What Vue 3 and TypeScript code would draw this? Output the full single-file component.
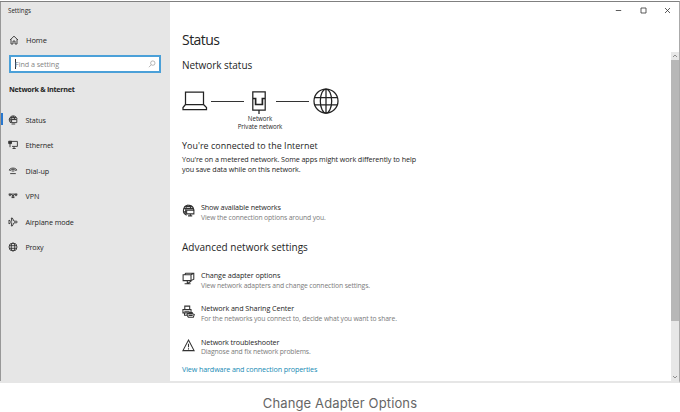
<script setup lang="ts">
interface NavItem { id: string; label: string; spacing: number }
interface Action { id: string; title: string; detail: string; ts: number; ds: number }

const nav: NavItem[] = [
  { id: 'status', label: 'Status', spacing: -0.1 },
  { id: 'ethernet', label: 'Ethernet', spacing: -0.15 },
  { id: 'dialup', label: 'Dial-up', spacing: -0.05 },
  { id: 'vpn', label: 'VPN', spacing: 0 },
  { id: 'airplane', label: 'Airplane mode', spacing: -0.07 },
  { id: 'proxy', label: 'Proxy', spacing: -0.2 },
]
const available: Action = { id: 'available', title: 'Show available networks', detail: 'View the connection options around you.', ts: -0.12, ds: -0.13 }
const advanced: Action[] = [
  { id: 'adapter', title: 'Change adapter options', detail: 'View network adapters and change connection settings.', ts: -0.06, ds: -0.14 },
  { id: 'sharing', title: 'Network and Sharing Center', detail: 'For the networks you connect to, decide what you want to share.', ts: -0.07, ds: -0.14 },
  { id: 'trouble', title: 'Network troubleshooter', detail: 'Diagnose and fix network problems.', ts: -0.12, ds: -0.14 },
]
</script>

<template>
  <figure class="figure">
    <div class="window">
      <aside class="sidebar">
        <div class="app-name"><span>Settings</span></div>
        <div class="home">
          <svg class="icon" viewBox="0 0 10 10"><path d="M1 5 5 1.2 9 5M2 4.3V9h2V6h2v3h2V4.3" /></svg>
          <span>Home</span>
        </div>
        <div class="search">
          <i class="caret"></i><span>Find a setting</span>
          <svg viewBox="0 0 8 8"><circle cx="4.8" cy="3.1" r="2.2" /><path d="M3.2 4.8.9 7.2" /></svg>
        </div>
        <div class="category"><span>Network &amp; Internet</span></div>
        <nav>
          <div v-for="n in nav" :key="n.id" class="nav-item" :class="{ active: n.id === 'status' }">
            <svg class="icon" viewBox="0 0 10 10">
              <g v-if="n.id === 'status'"><path d="M2.8 8A4 4 0 1 1 9.2 4.2M1 4.2h7.7M2.2 2.5h5.8M4.4 1C2.8 3 2.6 5 3 8M5.4 1l1.3 3" /><path d="M3.6 4.6h5.2v3H3.6zM3.5 9h3.7" /></g>
              <g v-else-if="n.id === 'ethernet'"><path d="M2.8 1.4h6.6v5H4M4.5 8.5h3.2M6 6.5v2M2 3.7v3.5" /><path class="fill" d="M.7 1.2h2.8v2.4H.7z" /></g>
              <g v-else-if="n.id === 'dialup'"><path d="M1.3 4.2C1.5 1.4 8.5 1.4 8.7 4.2H6.8L6.2 3.3H3.8l-.6.9zM3.7 5h2.6M2.2 7.6h5.6" /></g>
              <g v-else-if="n.id === 'vpn'"><path d="M.7 3.1h8.6M3.4 3.2l1.6 2 1.6-2M3.5 6.6h3" /><circle cx="2" cy="3.9" r=".9" /><circle cx="8" cy="3.9" r=".9" /><circle cx="5" cy="5.6" r=".8" /></g>
              <g v-else-if="n.id === 'airplane'"><path d="M1 3v4l1.4-1.2h1.4L3.3 9h1L6 5.8h2.3c1.3 0 1.3-1.6 0-1.6H6L4.3 1h-1l.5 3.2H2.4z" /></g>
              <g v-else><circle cx="5" cy="5" r="4" /><ellipse cx="5" cy="5" rx="1.8" ry="4" /><path d="M1 3.7h8M1 6.3h8" /></g>
            </svg>
            <span :style="{ letterSpacing: n.spacing + 'px' }">{{ n.label }}</span>
          </div>
        </nav>
      </aside>

      <main class="content">
        <div class="titlebar">
          <svg viewBox="0 0 7 7"><path d="M.8 3.5h5.4" /></svg>
          <svg viewBox="0 0 7 7"><path d="M1 1h5v5H1z" /></svg>
          <svg viewBox="0 0 7 7"><path d="m1 1 5 5M6 1 1 6" /></svg>
        </div>
        <h1><span>Status</span></h1>
        <h2 class="network-status"><span>Network status</span></h2>
        <div class="diagram">
          <svg class="computer" viewBox="0 0 26 20"><path d="M3.5 1h18v12.5h-18zM3.5 13.5 1 16.5v2h23.5v-2l-3-3" /></svg>
          <i></i>
          <svg class="port" viewBox="0 0 14 23"><path d="M.8.8h12.4v18.4H.8zM7 19.2V23" /><path class="socket" d="M1 7.5h2.6v6h6.8v-6H13" /></svg>
          <i></i>
          <svg class="globe" viewBox="0 0 26 26"><circle cx="13" cy="13" r="12" /><ellipse cx="13" cy="13" rx="5.7" ry="12" /><path d="M1.6 9.5h22.8M1.6 16.8h22.8M13 1v24" /></svg>
        </div>
        <div class="network-name"><span>Network</span><span>Private network</span></div>
        <h3><span>You're connected to the Internet</span></h3>
        <p><span>You're on a metered network. Some apps might work differently to help</span><br /><span>you save data while on this network.</span></p>
        <div class="action available">
          <svg viewBox="0 0 14 14"><path d="M5 12A5.5 5.5 0 1 1 12.6 7M1.3 5h11M1 8.5h3M6.5 1C4 3 3.6 7 4.2 10.5M7 1c1.7 1 2.3 2.5 2.6 4M2.4 2.8h9" /><path d="M5 6.6h7.8v4H5zM9 10.6v2M6.5 12.8h4.5" /></svg>
          <div><div class="title"><span :style="{ letterSpacing: available.ts + 'px' }">{{ available.title }}</span></div><div class="detail"><span :style="{ letterSpacing: available.ds + 'px' }">{{ available.detail }}</span></div></div>
        </div>
        <h2 class="advanced"><span>Advanced network settings</span></h2>
        <div v-for="a in advanced" :key="a.id" class="action">
          <svg viewBox="0 0 14 14">
            <g v-if="a.id === 'adapter'"><path d="M1.2 3h8.5v6.3H1.2zM3 2.8 4 1.3h8.7v6.4l-3 1.6M9.7 3l3-1.7M5.7 9.3v3M2.8 12.6h6.5M6 12.4l4-2.6" /></g>
            <g v-else-if="a.id === 'sharing'"><path d="M3 4.5V1.2h5.3v3.3M1 4.8h8.7v3.7H1zM2.7 8.7V11h2.5M2.5 6.7h5.7" /><path d="M6 9.3h5l2.2 1-1 2.8H6.8L5.3 10.8zM8 9.2V8h3v1.3M7 11.2h4.5" /></g>
            <g v-else><path d="M7 1.2 13 12.5H1z" /><path d="M7 5v4M7 10v1.2" /></g>
          </svg>
          <div><div class="title"><span :style="{ letterSpacing: a.ts + 'px' }">{{ a.title }}</span></div><div class="detail"><span :style="{ letterSpacing: a.ds + 'px' }">{{ a.detail }}</span></div></div>
        </div>
        <a class="properties"><span>View hardware and connection properties</span></a>
      </main>

      <div class="scrollbar">
        <svg viewBox="0 0 8 8"><path d="m2 5 2-2 2 2" /></svg>
        <div class="thumb"></div>
        <svg class="down" viewBox="0 0 8 8"><path d="m2 3 2 2 2-2" /></svg>
      </div>
    </div>
    <figcaption><span>Change Adapter Options</span></figcaption>
  </figure>
</template>

<style>
body { background: #fff; }
</style>

<style scoped>
* { box-sizing: border-box; }
.figure { margin: 0; padding-top: 1px; width: 680px; height: 412px; overflow: hidden; background: #fff; font-family: "Open Sans", "Noto Sans", sans-serif; color: #252525; font-size: 7.2px; }
span { white-space: nowrap; }
svg { fill: none; stroke: #333; stroke-width: .8; flex: none; display: block; }
.window { display: flex; height: 382px; border-top: 1px solid #808080; border-bottom: 2px solid #e6e6e6; border-right: 1px solid #aaa; }
.sidebar { width: 170px; background: #e6e6e6; border-left: 1px solid #989898; }
.app-name { height: 16px; line-height: 17px; padding-left: 7px; font-size: 6.2px; }
.home { display: flex; align-items: center; height: 17px; margin-top: 13px; padding-left: 8px; gap: 7px; font-size: 7.5px; letter-spacing: -.1px; }
.icon { width: 10px; height: 10px; stroke-width: .9; }
.search { display: flex; align-items: center; width: 152px; height: 18px; margin: 7px 0 0 8px; padding: 0 3px 0 4px; border: 2px solid #4ba0d8; background: #fff; color: #858585; font-size: 7.2px; letter-spacing: -.05px; }
.search svg { width: 8px; height: 8px; margin-left: auto; stroke: #999; stroke-width: .7; }
.caret { width: 1px; height: 10px; background: #333; margin-right: -1px; }
.category { padding-left: 8px; margin-top: 9px; line-height: 14px; font-weight: 700; font-size: 7.2px; letter-spacing: -.27px; }
nav { margin-top: 11.4px; }
.nav-item { display: flex; align-items: center; height: 25.4px; padding-left: 7px; gap: 7.5px; }
.nav-item .fill { fill: #333; }
.active { background: linear-gradient(#2878d0, #2878d0) 0 6px / 2px 12px no-repeat; }
.content { width: 501px; padding-left: 12px; background: #fff; }
.titlebar { height: 17px; display: flex; justify-content: flex-end; align-items: center; gap: 17.5px; }
.titlebar svg { width: 7px; height: 7px; }
h1, h2, h3, p { margin: 0; font-weight: 400; }
h1 { height: 25px; margin-top: 8px; line-height: 25px; font-size: 14px; letter-spacing: -.55px; }
h2 { font-size: 10px; line-height: 16px; height: 16px; letter-spacing: -.04px; }
.network-status { margin-top: 5px; }
.diagram { display: flex; height: 28px; margin-top: 14px; align-items: center; }
.diagram i { width: 33px; height: 1px; background: #333; }
.diagram svg { stroke: #222; stroke-width: 1.25; }
.computer { width: 26px; height: 20px; margin-right: 3px; }
.port { width: 14px; height: 23px; margin: 3px 10px 0 8px; }
.port .socket { stroke-width: 1.7; }
.globe { width: 26px; height: 26px; margin-left: 4px; }
.network-name { display: flex; flex-direction: column; align-items: center; width: 156px; font-size: 6.2px; line-height: 8px; letter-spacing: -.05px; }
h3 { height: 14px; margin-top: 8px; line-height: 14px; font-size: 8.9px; letter-spacing: .05px; }
p { line-height: 9.5px; margin-top: 2px; height: 19px; letter-spacing: -.085px; }
.action { display: flex; height: 33.4px; gap: 6px; align-items: flex-start; }
.action > svg { width: 13px; height: 13px; margin-top: 2px; stroke-width: 1.15; }
.title { line-height: 10px; height: 10px; }
.detail { line-height: 10px; padding-top: .7px; color: #7b7b7b; font-size: 6.8px; }
.available { margin-top: 28px; height: 20px; }
.advanced { margin: 17px 0 15px; letter-spacing: .01px; }
.properties { display: block; color: #178bb5; line-height: 11px; margin-top: -6px; font-size: 7.2px; font-weight: 500; letter-spacing: -.13px; }
.scrollbar { width: 8px; margin-top: 50px; background: #e7e7e7; display: flex; flex-direction: column; }
.scrollbar svg { width: 8px; height: 8px; stroke: #777; }
.thumb { height: 261px; background: #b7b7b7; }
.down { margin-top: auto; }
figcaption { text-align: center; color: #666; font-family: Inter, "Liberation Sans", sans-serif; font-size: 13px; letter-spacing: .13px; line-height: 18px; margin-top: 11px; }
</style>
